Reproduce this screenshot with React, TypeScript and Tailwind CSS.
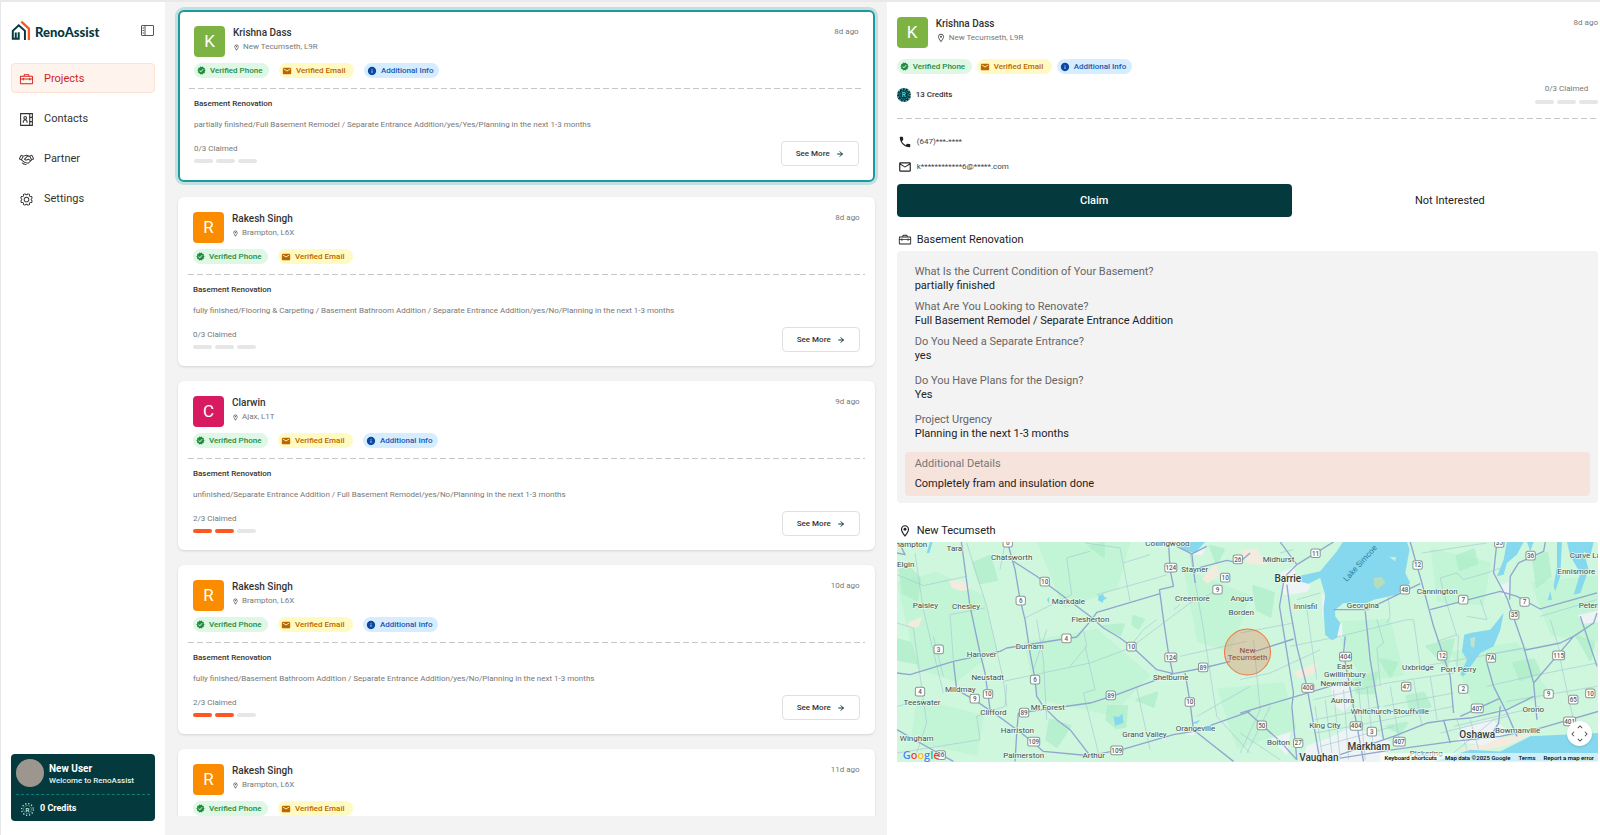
import { useState } from 'react';
import { clsx } from 'clsx';
import { PiToolbox, PiHandshake, PiGear } from 'react-icons/pi';
import {
  MdVerified,
  MdEmail,
  MdInfo,
  MdPhone,
  MdOutlineEmail,
  MdOutlineLocationOn,
  MdKeyboardArrowUp,
  MdKeyboardArrowDown,
  MdKeyboardArrowLeft,
  MdKeyboardArrowRight
} from 'react-icons/md';
import { ArrowRight } from 'lucide-react';

interface Project {
  id: number;
  name: string;
  place: string;
  age: string;
  color: string;
  extraInfo: boolean;
  summary: string;
  claimed: number;
}

const projects: Project[] = [
  {
    id: 1,
    name: 'Krishna Dass',
    place: 'New Tecumseth, L9R',
    age: '8d ago',
    color: 'bg-[#7cb342]',
    extraInfo: true,
    summary: 'partially finished/Full Basement Remodel / Separate Entrance Addition/yes/Yes/Planning in the next 1-3 months',
    claimed: 0
  },
  {
    id: 2,
    name: 'Rakesh Singh',
    place: 'Brampton, L6X',
    age: '8d ago',
    color: 'bg-[#fb8c00]',
    extraInfo: false,
    summary: 'fully finished/Flooring & Carpeting / Basement Bathroom Addition / Separate Entrance Addition/yes/No/Planning in the next 1-3 months',
    claimed: 0
  },
  {
    id: 3,
    name: 'Clarwin',
    place: 'Ajax, L1T',
    age: '9d ago',
    color: 'bg-[#d81b60]',
    extraInfo: true,
    summary: 'unfinished/Separate Entrance Addition / Full Basement Remodel/yes/No/Planning in the next 1-3 months',
    claimed: 2
  },
  {
    id: 4,
    name: 'Rakesh Singh',
    place: 'Brampton, L6X',
    age: '10d ago',
    color: 'bg-[#fb8c00]',
    extraInfo: true,
    summary: 'fully finished/Basement Bathroom Addition / Separate Entrance Addition/yes/No/Planning in the next 1-3 months',
    claimed: 2
  },
  {
    id: 5,
    name: 'Rakesh Singh',
    place: 'Brampton, L6X',
    age: '11d ago',
    color: 'bg-[#fb8c00]',
    extraInfo: false,
    summary: 'fully finished/Basement Bathroom Addition / Separate Entrance Addition/yes/No/Planning in the next 1-3 months',
    claimed: 0
  }
];

const answers = [
  { question: 'What Is the Current Condition of Your Basement?', answer: 'partially finished', gap: 'mb-[7px]' },
  { question: 'What Are You Looking to Renovate?', answer: 'Full Basement Remodel / Separate Entrance Addition', gap: 'mb-[7px]' },
  { question: 'Do You Need a Separate Entrance?', answer: 'yes', gap: 'mb-[11px]' },
  { question: 'Do You Have Plans for the Design?', answer: 'Yes', gap: 'mb-[11px]' },
  { question: 'Project Urgency', answer: 'Planning in the next 1-3 months', gap: 'mb-[11px]' }
];

function Logo() {
  return (
    <svg viewBox="2 0 58 64" className="h-[21px] w-5" fill="none" aria-hidden="true">
      <path d="M43 61V33L24 16L6 33V57H24V37M15 57V38" stroke="#04393e" strokeWidth="6" />
      <path d="M32 5L55 26V61" stroke="#fe5621" strokeWidth="7" />
    </svg>
  );
}

function PanelIcon() {
  return (
    <svg viewBox="0 0 26 22" className="h-[11px] w-[13px]" fill="none" stroke="#555" strokeWidth="2" aria-hidden="true">
      <rect x="1" y="1" width="24" height="20" rx="1" />
      <path d="M8 1V21" />
      <path d="M3 6H6M3 11H6M3 16H6" />
    </svg>
  );
}

function ContactsIcon({ className }: { className?: string }) {
  return (
    <svg viewBox="0 0 28 28" className={className} fill="none" stroke="currentColor" strokeWidth="2" aria-hidden="true">
      <path d="M3 3H20V25H3Z" />
      <path d="M20 3H25V25H20M20 10H25M20 18H25" />
      <path d="M8 20V17L11 14H12L15 17V20" />
      <circle cx="11.500" cy="11" r="2.500" />
    </svg>
  );
}

function CreditIcon({ className, fill, line }: { className?: string; fill: string; line: string }) {
  return (
    <svg viewBox="0 0 40 40" className={className} fill="none" aria-hidden="true">
      <circle cx="20" cy="20" r="20" fill={fill} />
      <circle cx="20" cy="20" r="18" stroke={line} strokeWidth="4" strokeDasharray="4 5.400" />
      <circle cx="20" cy="20" r="12" stroke={line} strokeWidth="2" strokeDasharray="3 2" />
      <text x="20" y="27" textAnchor="middle" fontSize="19" fontWeight="700" fill={line}>
        R
      </text>
    </svg>
  );
}

const navItems = [
  { label: 'Projects', icon: PiToolbox },
  { label: 'Contacts', icon: ContactsIcon },
  { label: 'Partner', icon: PiHandshake },
  { label: 'Settings', icon: PiGear }
];

function Sidebar() {
  return (
    <aside className="flex flex-col border-l border-gray-200 bg-white px-2.5 pb-3.5">
      <div className="flex items-center justify-between pt-[18px]">
        <div className="flex items-end gap-1">
          <Logo />
          <span className="font-['Lato'] text-[13px]/[17px] font-black text-[#04393e]">RenoAssist</span>
        </div>
        <button type="button" aria-label="Toggle sidebar" className="mr-px">
          <PanelIcon />
        </button>
      </div>
      <nav className="mt-[22px] flex flex-col gap-2.5">
        {navItems.map(({ label, icon: Icon }) => (
          <a
            key={label}
            href="#"
            className={clsx(
              'flex h-[30px] items-center gap-2.5 rounded border px-[7px] pt-0.5 text-[11px]',
              label === 'Projects' ? 'border-[#fde3d3] bg-[#fef3ed] text-[#d0261b]' : 'border-transparent text-[#333]'
            )}
          >
            <Icon className="size-[15px]" />
            {label}
          </a>
        ))}
      </nav>
      <div className="mt-auto rounded bg-[#04393e] px-[5px] pt-[5px] text-white">
        <div className="flex items-center gap-[5px] border-b border-dashed border-[#0d7b7b] pb-[7px]">
          <span className="size-7 rounded-full bg-[#9c968e]" />
          <div className="pt-0.5">
            <p className="text-[10px]/[13px] font-bold">New User</p>
            <p className="text-[8px]/[12px] font-medium text-[#e2f4f1]">Welcome to RenoAssist</p>
          </div>
        </div>
        <div className="flex h-[26px] items-center gap-1.5 px-[5px] pt-0.5 text-[9px] font-bold">
          <CreditIcon className="size-[13px]" fill="#04393e" line="#a8e8e3" />
          0 Credits
        </div>
      </div>
    </aside>
  );
}

function Badges({ extraInfo, className }: { extraInfo: boolean; className: string }) {
  const pill = 'flex h-[15px] w-[75px] items-center gap-1 rounded-full px-[3px] text-[8px] font-medium whitespace-nowrap';
  return (
    <div className={clsx('flex', className)}>
      <span className={clsx(pill, 'bg-[#dff7e5] text-[#238c41]')}>
        <MdVerified className="size-[9px]" />
        Verified Phone
      </span>
      <span className={clsx(pill, 'bg-[#fffac2] text-[#bd6500]')}>
        <MdEmail className="size-2.5" />
        Verified Email
      </span>
      {extraInfo && (
        <span className={clsx(pill, 'bg-[#d6edff] text-[#1857b0]')}>
          <MdInfo className="size-2.5 text-[#0b479d]" />
          Additional Info
        </span>
      )}
    </div>
  );
}

function ClaimBars({ claimed }: { claimed: number }) {
  return (
    <div className="flex gap-[3px]">
      {[0, 1, 2].map((i) => (
        <span key={i} className={clsx('h-1 w-[19px] rounded-full', i < claimed ? 'bg-[#ff5722]' : 'bg-[#e6e6e6]')} />
      ))}
    </div>
  );
}

function DashedLine({ className }: { className?: string }) {
  return (
    <div
      className={clsx(
        'h-px bg-[repeating-linear-gradient(90deg,#c6c6c6_0_6px,transparent_6px_9px)]',
        className
      )}
    />
  );
}

function PersonHeader({ project, detail }: { project: Project; detail?: boolean }) {
  return (
    <div className="flex">
      <span
        className={clsx(
          'flex size-[31px] items-center justify-center rounded text-[17px] text-white',
          project.color
        )}
      >
        {project.name[0]}
      </span>
      <div className="ml-2">
        <p className="text-[10px]/[13px] font-medium text-[#333]">{project.name}</p>
        <p className="mt-px flex h-[14px] items-center gap-[3px] text-[8px] text-[#777]">
          <MdOutlineLocationOn className={clsx('text-[#555]', detail ? 'size-2.5' : 'size-[7px]')} />
          {project.place}
        </p>
      </div>
      <time className="ml-auto pt-px text-[8px]/[10px] text-[#777]">{project.age}</time>
    </div>
  );
}

function ProjectCard({ project, selected, onSelect }: { project: Project; selected: boolean; onSelect: () => void }) {
  return (
    <article
      className={clsx(
        'shrink-0 rounded-md bg-white',
        selected ? 'border-2 border-[#1d9a9c] p-[14px] ring-[3px] ring-[#c3dfe0]' : 'p-[15px] pb-[14px] shadow-sm'
      )}
    >
      <PersonHeader project={project} />
      <Badges extraInfo={project.extraInfo} className="mt-1.5 gap-2.5" />
      <DashedLine className="-mx-[5px] mt-2.5" />
      <p className="mt-2.5 text-[8px]/[10px] font-medium text-[#333]">Basement Renovation</p>
      <p className="mt-[11px] text-[8px]/[10px] text-[#777]">{project.summary}</p>
      <div className="mt-[11px] flex h-[25px] items-start justify-between">
        <div className="pt-[3px]">
          <p className="mb-[5px] text-[8px]/[10px] text-[#777]">{project.claimed}/3 Claimed</p>
          <ClaimBars claimed={project.claimed} />
        </div>
        <button
          type="button"
          onClick={onSelect}
          className="flex h-[25px] w-[78px] items-center justify-center gap-1.5 rounded border border-[#e0e0e0] text-[8px] font-medium text-[#333]"
        >
          See More
          <ArrowRight className="size-2 text-[#04393e]" strokeWidth={3} />
        </button>
      </div>
    </article>
  );
}

// Map geometry, in units of a third of a pixel. West and east halves have their own origin.
const westMinor = [
  'M21 165L100 198L230 170', 'M75 100L100 270L160 520', 'M21 310L70 325L110 610L80 700', 'M230 70L290 260L340 480L350 560', 'M180 285L285 265',
  'M180 285L190 420', 'M345 70L330 150', 'M530 115L545 225L405 295', 'M585 70L690 85L720 245', 'M530 115L600 95', 'M620 225L800 175L830 165',
  'M340 485L600 430L720 385L900 250L1000 205', 'M540 440L590 380L580 330', 'M585 380L615 510L580 520L625 700', 'M440 300L460 420L470 600',
  'M740 505L780 690', 'M800 300L760 330L720 380', 'M900 100L940 330L980 590L1080 700', 'M870 410L1070 365', 'M920 590L1080 500',
  'M260 590L270 660L21 700', 'M130 350L160 470', 'M21 560L100 540', 'M350 495L345 560L260 590', 'M700 130L780 105', 'M850 270L870 255', 'M470 330L430 450'
];

const westMajor = [
  'M214 67L240 260L270 400L285 460L300 570', 'M21 460L60 465L190 425L330 395L350 385L560 352L605 300L620 278L810 222', 'M352 67L375 150L390 240L405 300L420 400L435 480L440 530L460 560L500 600L540 630L600 708',
  'M370 125L440 170L500 215L600 290L640 325L690 355L730 385L800 450L850 462', 'M190 425L200 510L260 545L340 600L420 660L460 695L600 708L700 688L850 645L910 635L1080 575', 'M835 67L840 150L850 200L808 210L820 300L835 400L848 462',
  'M385 580L600 550L680 525L760 495L850 462L940 445L1020 425', 'M385 580L380 640L375 725', 'M885 460L900 550L910 630L960 670L1030 725', 'M905 100L915 190', 'M860 80L905 103L950 80', 'M905 150L1010 122L1045 130L1080 100',
  'M21 630L100 675L190 725', 'M21 100L45 105L30 75'
];

const eastMinor = [
  'M0 340L160 310', 'M40 360L60 570L0 700', 'M170 240L240 220', 'M200 270L230 480', 'M0 480L90 460L220 400L240 390', 'M150 380L300 350L500 300L520 300L540 440', 'M410 300L430 370L410 385L420 500', 'M440 190L450 290L440 310', 'M545 100L740 70',
  'M600 175L650 160L670 180L740 160L780 145', 'M600 175L610 220L650 350', 'M720 240L740 300L680 290', 'M590 365L650 345', 'M655 345L650 440', 'M850 385L740 405', 'M545 440L860 385', 'M740 500L870 470L1070 430', 'M960 420L990 560L1000 600',
  'M900 290L1070 240', 'M930 300L960 400', 'M800 545L1070 500', 'M220 540L440 490L640 460', 'M225 560L245 700', 'M255 540L275 700', 'M280 510L300 720', 'M310 510L325 720', 'M355 500L375 720', 'M380 500L400 690',
  'M225 600L420 560', 'M225 640L440 600L640 560', 'M240 680L460 620', 'M430 560L640 520', 'M450 500L480 680', 'M520 480L545 620', 'M570 470L590 600', 'M650 600L680 690', 'M690 600L715 690', 'M600 640L800 590', 'M0 640L120 720', 'M90 560L20 700', 'M640 620L900 560', 'M120 100L160 90', 'M640 700L760 600'
];

const eastMajor = [
  'M120 67L170 135L140 165L130 190L118 260L160 520L155 560L170 720', 'M140 195L150 270L170 380L200 500L240 725', 'M0 580L150 535L320 485', 'M20 575L120 665L170 720', 'M170 135L280 67', 'M315 350L310 400L345 590L370 725', 'M45 395L160 358',
  'M375 275L390 420L430 660', 'M280 270L380 270L540 192', 'M510 67L545 190L580 320L630 470L640 580', 'M570 270L780 215L830 230L900 268L1070 220', 'M770 67L760 160L800 235L850 380L880 490L890 600', 'M808 240L810 170L835 130L910 95L915 67',
  'M850 392L960 370L1000 350L1060 310L1070 280', 'M880 490L1000 350', 'M1020 290L1070 440', 'M740 430L760 500L800 580L830 650', 'M880 530L800 570L690 595L630 600L560 610L460 650L300 705', 'M300 715L460 690L640 665L780 650L900 625L1074 575', 'M660 590L780 535', 'M780 560L775 610L750 650', 'M610 600L630 670'
];

const lakes = [
  'M860 67H945L915 100L880 92Z', 'M120 67L110 100L118 100L128 67Z', 'M625 228L640 222L640 230L651 235L640 242L638 250L624 242Z', 'M670 590L685 592L697 582L700 610L675 618Z', 'M905 610L930 600L920 612Z', 'M471 240L478 230L476 252Z'
];

const eastLakes = [
  'M308 67H500L508 90L495 160L510 190L470 225L400 240L380 250L310 250L285 270L285 290L300 310L290 355L275 362L255 345L250 265L255 225L240 175L205 192L175 185L180 168L240 155L290 95Z',
  'M800 67H850L830 105L800 130L790 165L770 170L790 120Z', 'M860 67H880L870 95Z', 'M950 67H965L960 170L945 215L940 200L950 140Z', 'M980 67H1060L1050 110L1030 95L1045 150L1020 220L1000 225L1020 160L990 110Z', 'M930 215L935 240L922 242Z',
  'M690 340L750 330L790 280L780 330L760 380L720 400L670 470L660 465L680 420L665 395L672 345Z', 'M580 725L690 690L780 695L870 650L1074 640V725Z'
];

const parks = [
  'M30 150L60 145L90 180L80 240L40 220Z', 'M250 130L300 110L320 180L270 190Z', 'M600 80L640 70L640 110Z', 'M640 320L700 315L690 345Z', 'M730 290L760 300L745 325L728 315Z', 'M655 560L710 560L705 620L680 625L650 600Z', 'M22 360L60 370L80 430L25 420Z', 'M960 80L1000 90L980 130Z', 'M740 540L800 520L790 560Z', 'M480 600L540 620L500 680L470 660Z'
];

const eastParks = [
  'M40 200L100 220L90 290L50 270Z', 'M340 480L410 460L400 520L350 520Z', 'M500 530L550 520L570 560L510 570Z', 'M560 380L640 360L620 440Z', 'M650 110L700 90L710 130L660 150Z', 'M820 430L880 420L900 460L840 480Z', 'M440 620L500 610L480 640Z', 'M1010 350L1060 370L1050 420Z', 'M880 120L920 100L930 170L890 200Z', 'M420 420L470 430L450 470Z'
];

const towns: [string, number, number][] = [
  ['hampton', 64, 83], ['Tara', 193, 94], ['Elgin', 47, 141], ['Chatsworth', 365, 120], ['Collingwood', 832, 78], ['Stayner', 914, 156], ['Paisley', 106, 264], ['Chesley', 228, 267], ['Markdale', 535, 252],
  ['Flesherton', 601, 306], ['Creemore', 907, 243], ['Angus', 1055, 244], ['Borden', 1053, 286], ['Hanover', 275, 411], ['Durham', 419, 388], ['Neustadt', 293, 482], ['Mildmay', 211, 516], ['Teeswater', 96, 555],
  ['Clifford', 310, 586], ['Mt Forest', 473, 571], ['Shelburne', 842, 480], ['Harriston', 382, 639], ['Grand Valley', 763, 652], ['Orangeville', 916, 633], ['Wingham', 80, 663], ['Palmerston', 401, 714], ['Arthur', 611, 715]
];

const eastTowns: [string, number, number][] = [
  ['Midhurst', 115, 127], ['Innisfil', 196, 269], ['Georgina', 368, 266], ['Cannington', 591, 222], ['Curve La', 1035, 115], ['Ennismore', 1008, 164], ['Peterb', 1050, 266], ['East', 314, 448], ['Gwillimbury', 314, 471],
  ['Newmarket', 302, 499], ['Aurora', 307, 550], ['Whitchurch-Stouffville', 449, 584], ['King City', 254, 624], ['Bolton', 115, 676], ['Uxbridge', 533, 452], ['Port Perry', 655, 456], ['Orono', 879, 578], ['Bowmanville', 832, 641], ['Pickering', 558, 708]
];

const cities: [string, number, number][] = [
  ['Barrie', 143, 186], ['Oshawa', 711, 656], ['Markham', 386, 691], ['Vaughan', 236, 724]
];

const shields: [string, number, number][] = [
  ['6', 353, 69], ['10', 464, 186], ['6', 392, 243], ['124', 842, 144], ['26', 1043, 119], ['10', 1005, 174], ['9', 982, 210], ['3', 146, 389], ['4', 529, 356], ['10', 724, 381], ['124', 842, 413], ['89', 939, 443],
  ['6', 435, 480], ['4', 90, 516], ['10', 294, 523], ['9', 254, 537], ['89', 662, 527], ['89', 402, 579], ['10', 899, 547], ['109', 431, 666], ['109', 680, 692], ['86', 152, 706]
];

const eastShields: [string, number, number][] = [
  ['11', 226, 101], ['12', 532, 136], ['48', 494, 210], ['35', 777, 70], ['36', 871, 108], ['7', 669, 240], ['7', 853, 247], ['35', 822, 286], ['404', 316, 411], ['12', 606, 408], ['7A', 752, 415], ['115', 955, 407],
  ['400', 203, 505], ['47', 498, 501], ['2', 669, 508], ['9', 925, 523], ['65', 999, 540], ['10', 1050, 521], ['407', 711, 566], ['401', 988, 605], ['50', 65, 617], ['404', 348, 619], ['3', 395, 636], ['407', 477, 666], ['27', 174, 670]
];

function MapHalf({
  minor,
  major,
  water,
  green,
  labels,
  signs
}: {
  minor: string[];
  major: string[];
  water: string[];
  green: string[];
  labels: [string, number, number][];
  signs: [string, number, number][];
}) {
  return (
    <>
      <path d={green.join('')} fill="#a5ecc2" opacity="0.55" strokeLinejoin="round" stroke="#a5ecc2" strokeWidth="8" />
      <path d={water.join('')} fill="#86d8ee" strokeLinejoin="round" />
      <path d={minor.join('')} stroke="#a9c9d3" strokeWidth="2" fill="none" />
      <path d={major.join('')} stroke="#90a6cf" strokeWidth="4" fill="none" strokeLinejoin="round" />
      {signs.map(([text, x, y]) => (
        <g key={text + x}>
          <rect
            x={x - (text.length > 2 ? 18 : 14)}
            y={y - 13}
            width={text.length > 2 ? 36 : 28}
            height="26"
            rx="6"
            fill="#fff"
            stroke="#8b9694"
            strokeWidth="3"
          />
          <text x={x} y={y + 7} textAnchor="middle" fontSize="19" fontWeight="500" fill="#555f5e">
            {text}
          </text>
        </g>
      ))}
      {labels.map(([text, x, y]) => (
        <text
          key={text}
          x={x}
          y={y}
          textAnchor="middle"
          fontSize="24"
          fill="#434e4b"
          stroke="#e6faef"
          strokeWidth="4"
          paintOrder="stroke"
        >
          {text}
        </text>
      ))}
    </>
  );
}

function ProjectMap() {
  return (
    <div className="relative h-[220px] overflow-hidden">
      <svg viewBox="0 0 2103 660" preserveAspectRatio="xMidYMid slice" className="size-full bg-[#cef7de]" role="img" aria-label="Map of New Tecumseth">
        <path
          d="M0 120L120 90L260 160L300 320L180 420L60 380ZM420 0H700L660 140L500 200ZM380 300L600 260L760 400L640 520L420 470ZM860 80L1060 160L1000 330L900 300ZM1300 240L1480 230L1520 400L1400 420ZM1600 20L1780 60L1760 190L1620 180ZM1660 330L1860 300L1960 460L1740 520ZM60 470L260 520L240 640L40 600ZM960 440L1160 420L1200 560L1020 620ZM1900 120L2103 100V300L1960 280Z"
          fill="#bff3d3"
          opacity="0.8"
        />
        <path
          d="M155 115L200 118L220 140L195 148L165 138ZM35 240L75 225L65 255L32 258ZM915 110L960 60L965 100L930 125ZM1030 25L1080 20L1110 70L1050 65ZM1190 390L1265 360L1250 395L1205 410ZM1690 620L1800 590L1920 570L1830 610L1720 632Z"
          fill="#f3ebdd"
        />
        <path
          d="M885 25L925 20L915 40L890 38ZM860 560L895 550L890 580L865 575ZM1150 90L1190 75L1200 110L1240 130L1230 150L1160 160ZM1275 150L1285 170L1275 230ZM1310 270L1335 240L1335 290ZM1300 430L1350 410L1365 480L1340 510L1310 490ZM1290 590L1350 560L1420 570L1480 600L1460 660H1210L1230 610ZM1690 560L1780 530L1840 570L1760 610L1680 600ZM1810 130L1835 120L1840 155L1815 165ZM2040 220L2103 205V240L2060 245ZM1120 590L1180 570L1170 640Z"
          fill="#eef3f5"
        />
        <g transform="translate(-21 -67)">
          <MapHalf minor={westMinor} major={westMajor} water={lakes} green={parks} labels={towns} signs={shields} />
        </g>
        <g transform="translate(1029 -67)">
          <MapHalf minor={eastMinor} major={eastMajor} water={eastLakes} green={eastParks} labels={eastTowns} signs={eastShields} />
          <path d="M400 175L425 172L435 190L412 208L402 198Z" fill="#b5dfbb" />
          <path d="M447 112L468 112L465 125Z" fill="#c5f2d6" />
          <path d="M690 355L705 352L702 385L692 380Z" fill="#bfe3cf" />
          {cities.map(([text, x, y]) => (
            <text
              key={text}
              x={x}
              y={y}
              textAnchor="middle"
              fontSize="30"
              fontWeight="500"
              fill="#333b39"
              stroke="#eefaf4"
              strokeWidth="4"
              paintOrder="stroke"
            >
              {text}
            </text>
          ))}
          <text transform="translate(320 187) rotate(-48)" fontSize="24" fill="#2b7f9c">
            Lake Simcoe
          </text>
          <circle cx="22" cy="397" r="69" fill="#e8673a" fillOpacity="0.28" stroke="#f0763f" strokeWidth="3" />
          <text textAnchor="middle" fontSize="24" fill="#8f4a3c">
            <tspan x="22" y="399">New</tspan>
            <tspan x="22" y="421">Tecumseth</tspan>
          </text>
        </g>
      </svg>
      <span className="absolute bottom-0 left-1.5 font-['Open_Sans'] text-[11px]/[15px] font-semibold [text-shadow:0_0_2px_white]">
        <span className="text-[#4285f4]">G</span>
        <span className="text-[#ea4335]">o</span>
        <span className="text-[#fbbc05]">o</span>
        <span className="text-[#4285f4]">g</span>
        <span className="text-[#34a853]">l</span>
        <span className="text-[#ea4335]">e</span>
      </span>
      <button
        type="button"
        aria-label="Map camera controls"
        className="absolute right-1.5 bottom-4 grid size-[25px] grid-cols-3 grid-rows-3 place-items-center rounded-full bg-white p-[3px] text-[#444] shadow"
      >
        <MdKeyboardArrowUp className="col-start-2 row-start-1 size-2.5" />
        <MdKeyboardArrowLeft className="col-start-1 row-start-2 size-2.5" />
        <MdKeyboardArrowRight className="col-start-3 row-start-2 size-2.5" />
        <MdKeyboardArrowDown className="col-start-2 row-start-3 size-2.5" />
      </button>
      <div className="absolute right-0 bottom-0 flex h-[9px] items-center gap-2 bg-white/60 px-1 text-[6px] font-medium whitespace-nowrap text-black">
        <button type="button">Keyboard shortcuts</button>
        <span>Map data ©2025 Google</span>
        <a href="#">Terms</a>
        <a href="#">Report a map error</a>
      </div>
    </div>
  );
}

function ProjectDetail({ project }: { project: Project }) {
  return (
    <section className="overflow-y-auto bg-white pt-[15px] pr-0.5 pl-2.5 [scrollbar-width:none]">
      <PersonHeader project={project} detail />
      <Badges extraInfo={project.extraInfo} className="mt-[11px] gap-[5px]" />
      <div className="mt-2.5 flex h-5 items-center justify-between">
        <p className="flex items-center gap-[5px] pt-0.5 text-[8px] font-medium text-[#333]">
          <CreditIcon className="size-[14px]" fill="#04393e" line="#63c3c8" />
          13 Credits
        </p>
        <div className="flex flex-col items-center gap-1.5">
          <p className="text-[8px]/[10px] text-[#777]">{project.claimed}/3 Claimed</p>
          <ClaimBars claimed={project.claimed} />
        </div>
      </div>
      <DashedLine className="mt-[14px]" />
      <p className="mt-4 flex h-[14px] items-center gap-[5px] pl-px text-[8px] text-[#444]">
        <MdPhone className="size-[14px] text-[#222]" />
        (647)***-****
      </p>
      <p className="mt-[11px] flex h-[14px] items-center gap-[5px] pl-px text-[8px] text-[#444]">
        <MdOutlineEmail className="size-[14px] text-[#222]" />
        k************6@*****.com
      </p>
      <div className="mt-2.5 grid grid-cols-[4fr_3fr] gap-2.5">
        <button type="button" className="h-[33px] rounded bg-[#04393e] pt-0.5 text-[11px] font-medium text-white">
          Claim
        </button>
        <button type="button" className="h-[33px] rounded pt-0.5 text-[11px] text-[#222]">
          Not Interested
        </button>
      </div>
      <h2 className="mt-[15px] flex h-4 items-center gap-[5px] pl-px text-[11px] text-[#222]">
        <PiToolbox className="size-[14px]" />
        Basement Renovation
      </h2>
      <div className="mt-[3px] rounded bg-[#f3f3f3] px-2 pt-[14px] pb-[7px]">
        <dl className="px-2.5 text-[11px]/[14px]">
          {answers.map((item) => (
            <div key={item.question} className={item.gap}>
              <dt className="text-[#666]">{item.question}</dt>
              <dd className="text-[#222]">{item.answer}</dd>
            </div>
          ))}
        </dl>
        <dl className="rounded bg-[#f5e3dc] px-2.5 py-[5px] text-[11px]/[14px]">
          <dt className="text-[#777]">Additional Details</dt>
          <dd className="mt-1.5 text-[#222]">Completely fram and insulation done</dd>
        </dl>
      </div>
      <h2 className="mt-5 mb-[3px] flex h-4 items-center gap-[5px] pl-px text-[11px] text-[#222]">
        <MdOutlineLocationOn className="size-[14px]" />
        New Tecumseth
      </h2>
      <ProjectMap />
    </section>
  );
}

export default function App() {
  const [selectedId, setSelectedId] = useState(1);
  const selected = projects.find((p) => p.id === selectedId) ?? projects[0];

  return (
    <div className="grid h-screen grid-cols-[165px_minmax(0,86fr)_minmax(0,85fr)] grid-rows-[minmax(0,1fr)] border-t-2 border-[#e9e9e9] bg-[#f3f3f3] font-['Roboto','Liberation_Sans',sans-serif]">
      <Sidebar />
      <main className="flex min-h-0 flex-col pb-[19px]">
        <div className="flex min-h-0 flex-1 flex-col gap-[15px] overflow-y-auto px-3 pt-2 pl-[13px] [scrollbar-width:none]">
          {projects.map((project) => (
            <ProjectCard
              key={project.id}
              project={project}
              selected={project.id === selectedId}
              onSelect={() => setSelectedId(project.id)}
            />
          ))}
        </div>
      </main>
      <ProjectDetail project={selected} />
    </div>
  );
}
